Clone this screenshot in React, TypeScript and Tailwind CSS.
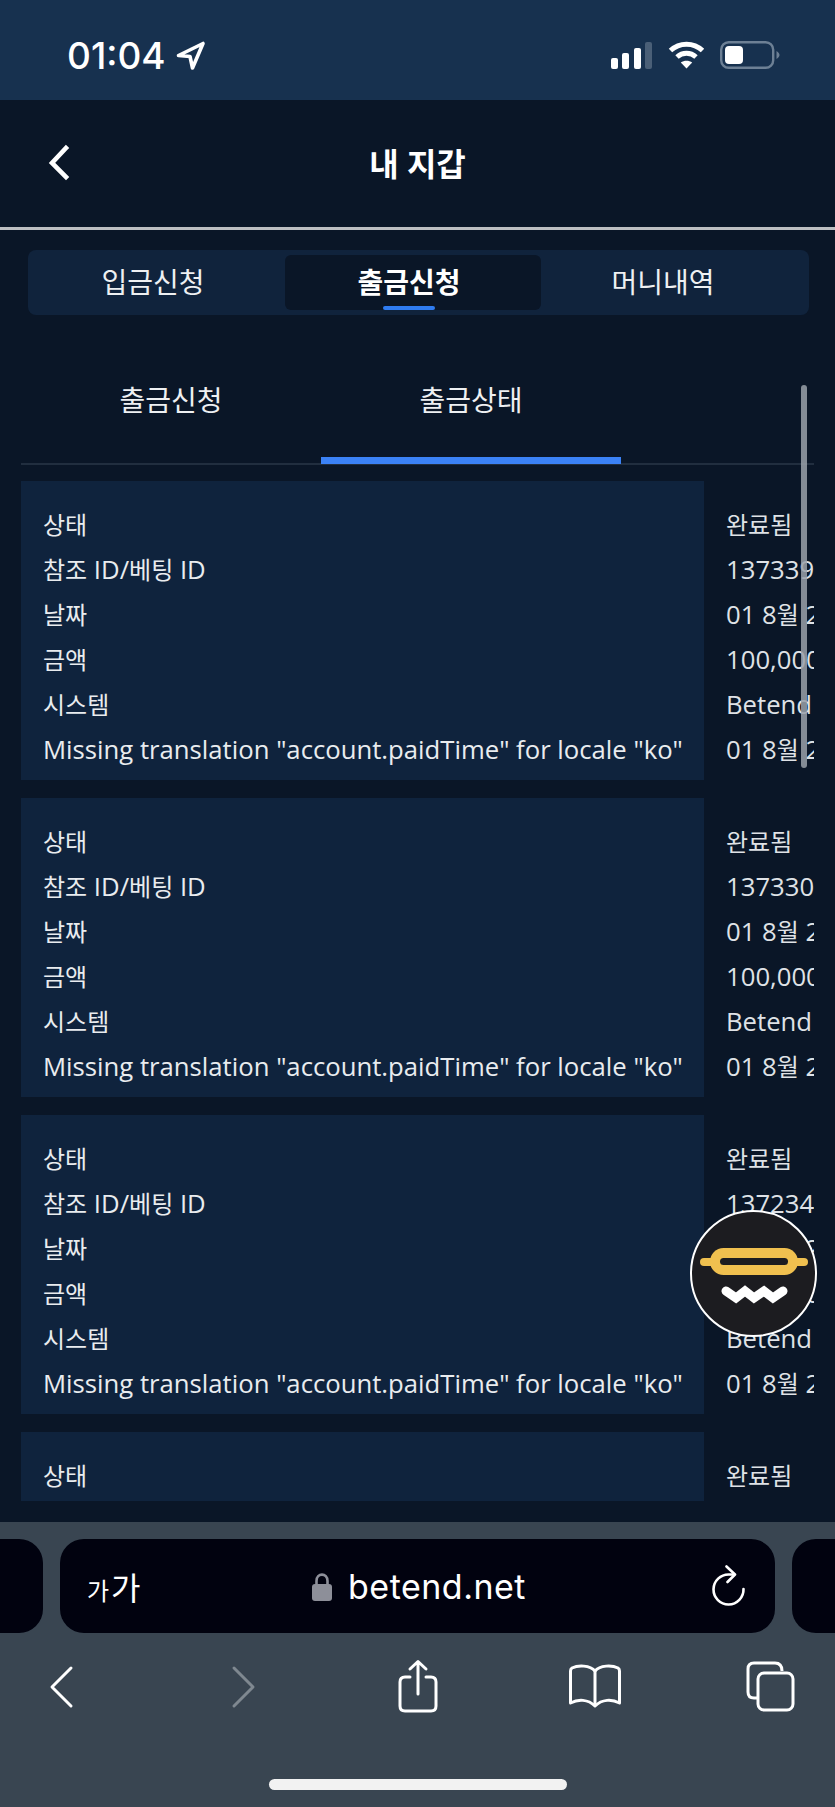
import React from 'react';

const KO = "font-['Open_Sans','Noto_Sans_CJK_KR',sans-serif]";

const LABELS = ['상태', '참조 ID/베팅 ID', '날짜', '금액', '시스템', 'Missing translation "account.paidTime" for locale "ko"'];

const RECORDS = [
    ['완료됨', '137339', '01 8월 2021', '100,000', 'Betend', '01 8월 2021'],
    ['완료됨', '137330', '01 8월 2021', '100,000', 'Betend', '01 8월 2021'],
    ['완료됨', '137234', '01 8월 2021', '100,000', 'Betend', '01 8월 2021'],
    ['완료됨', '137201', '01 8월 2021', '100,000', 'Betend', '01 8월 2021'],
];

// hangul runs are a touch smaller than the latin text next to them
const MixedText: React.FC<{ text: string }> = ({ text }) => (
    <>
        {text.split(/([가-힣]+)/).map((part, i) =>
            /[가-힣]/.test(part) ? (
                <span key={i} className="text-[24px]">{part}</span>
            ) : (
                <span key={i}>{part}</span>
            )
        )}
    </>
);

const StatusBar: React.FC = () => (
    <div className="h-[100px] shrink-0 bg-[#17314f] flex items-start justify-between pl-[67px] pr-[55px] pt-[40px] text-white">
        <div className="flex items-center">
            <span className="font-['Inter',sans-serif] font-medium text-[37px] leading-[32px]">01:04</span>
            <svg className="ml-[10px]" width="30" height="30" viewBox="0 0 30 30" fill="none" stroke="white" strokeWidth="3.6" strokeLinejoin="round">
                <path d="M2.5 14.5 L27 2.5 L16.5 27 L14 15.5 Z" />
            </svg>
        </div>
        <div className="flex items-center h-[30px]">
            <svg width="42" height="27" viewBox="0 0 42 27">
                <rect x="0" y="16" width="7" height="11" rx="2" fill="white" />
                <rect x="11" y="11" width="7" height="16" rx="2" fill="white" />
                <rect x="23" y="6" width="7" height="21" rx="2" fill="white" />
                <rect x="34" y="0" width="7" height="27" rx="2" fill="#4a5f77" />
            </svg>
            <svg className="ml-[15px]" width="37" height="28" viewBox="0 0 37 28" fill="none" stroke="white" strokeWidth="5">
                <path d="M2.5 9.5 C11.5 1 25.5 1 34.5 9.5" />
                <path d="M9 16 C14.5 11 22.5 11 28 16" />
                <path d="M18.5 27.5 L12.8 21.6 C16 19 21 19 24.2 21.6 Z" fill="white" stroke="none" />
            </svg>
            <svg className="ml-[15px]" width="60" height="28" viewBox="0 0 60 28">
                <rect x="1.2" y="1.2" width="52" height="25.6" rx="7.5" fill="none" stroke="#6d8095" strokeWidth="2.4" />
                <rect x="5" y="5" width="18" height="18" rx="4" fill="white" />
                <path d="M56.5 10 C58.5 11 59.5 13 59.5 14 C59.5 15 58.5 17 56.5 18 Z" fill="#6d8095" />
            </svg>
        </div>
    </div>
);

const Header: React.FC = () => (
    <div className="h-[130px] shrink-0 relative flex items-center justify-center border-b-[3px] border-[#bdbfc2]">
        <svg className="absolute left-[46px] top-[42px]" width="26" height="40" viewBox="0 0 26 40" fill="none" stroke="white" strokeWidth="4.6" strokeLinecap="square">
            <path d="M20 6 L6 21 L20 35" />
        </svg>
        <h1 className={`${KO} font-bold text-white text-[32px] leading-none`}>내 지갑</h1>
    </div>
);

const SegmentTabs: React.FC = () => (
    <div className="mx-[26px] ml-[28px] mt-[20px] h-[65px] shrink-0 rounded-[8px] bg-[#10233c] grid grid-cols-[256px_256px_252px] pl-[1px] py-[5px]">
        <div className={`${KO} flex items-center justify-center pr-[8px] pb-[2px] text-[28px] text-[#eef0f2]`}>입금신청</div>
        <div className={`${KO} relative flex items-center justify-center pr-[8px] pb-[2px] rounded-[6px] bg-[#0a1627] text-[28px] font-bold text-white`}>
            출금신청
            <span className="absolute bottom-0 left-[98px] w-[52px] h-[4px] rounded-[2px] bg-[#2f7cf0]" />
        </div>
        <div className={`${KO} flex items-center justify-center pr-[8px] pb-[2px] text-[28px] text-[#eef0f2]`}>머니내역</div>
    </div>
);

const SubTabs: React.FC = () => (
    <div className="mx-[21px] mt-[29px] h-[121px] shrink-0 flex border-b-[2px] border-[#212e3f]">
        <div className={`${KO} w-[300px] flex justify-center pt-[32px] text-[28px] leading-[48px] text-[#eef0f2]`}>출금신청</div>
        <div className={`${KO} w-[300px] flex justify-center pt-[32px] text-[28px] leading-[48px] text-[#eef0f2] border-b-[7px] border-[#3b82f6] h-[120px]`}>출금상태</div>
    </div>
);

const RecordCard: React.FC<{ values: string[] }> = ({ values }) => (
    <div className={`${KO} flex h-[299px] shrink-0 text-[25.7px] leading-[45px] text-[#e9ecef]`}>
        <div className="w-[683px] shrink-0 bg-[#0f233d] pl-[22px] pt-[21px]">
            {LABELS.map((label) => (
                <div key={label} className="h-[45px] whitespace-nowrap">
                    <MixedText text={label} />
                </div>
            ))}
        </div>
        <div className="flex-1 overflow-hidden pl-[22px] pt-[21px]">
            {values.map((value, i) => (
                <div key={i} className="h-[45px] whitespace-nowrap text-[#dfe2e6]">
                    <MixedText text={value} />
                </div>
            ))}
        </div>
    </div>
);

const BrowserBar: React.FC = () => (
    <div className="h-[285px] shrink-0 bg-[#394551] relative pt-[17px]">
        <div className="flex gap-[17px] h-[94px]">
            <div className="w-[43px] rounded-r-[24px] bg-[#01020f]" />
            <div className="w-[715px] rounded-[24px] bg-[#01020f] relative flex items-center justify-center text-white">
                <span className="absolute left-[27px] top-[31px] flex items-baseline font-['Noto_Sans_CJK_KR',sans-serif] leading-none">
                    <span className="text-[24px]">가</span>
                    <span className="text-[32px] ml-[2px]">가</span>
                </span>
                <svg className="ml-[3px] mt-[1px]" width="20" height="28" viewBox="0 0 20 28">
                    <path d="M4.5 13 V8 C4.5 -0.5 15.5 -0.5 15.5 8 V13" fill="none" stroke="#8d8f99" strokeWidth="2.6" />
                    <rect x="0" y="11" width="20" height="17" rx="3" fill="#8d8f99" />
                </svg>
                <span className="ml-[16px] font-['Inter',sans-serif] text-[34px] leading-none tracking-[0.5px] mt-[1px]">betend.net</span>
                <svg className="absolute left-[652px] top-[26px]" width="34" height="42" viewBox="0 0 34 42" fill="none" stroke="white" strokeWidth="2.6" strokeLinecap="round" strokeLinejoin="round">
                    <path d="M31.5 24 A15 15 0 1 1 17 9.5 L21 9.5" />
                    <path d="M14.5 1.5 L23 9.5 L15.5 17" />
                </svg>
            </div>
            <div className="flex-1 rounded-l-[24px] bg-[#01020f]" />
        </div>
        <div className="flex items-start h-[52px] mt-[29px] pl-[35px]">
            <svg width="52" height="52" viewBox="0 0 52 52" fill="none" stroke="white" strokeWidth="3" strokeLinecap="round" strokeLinejoin="round">
                <path d="M36 6 L17 25 L36 44" />
            </svg>
            <svg className="ml-[130px]" width="52" height="52" viewBox="0 0 52 52" fill="none" stroke="#7f8890" strokeWidth="3" strokeLinecap="round" strokeLinejoin="round">
                <path d="M17 6 L36 25 L17 44" />
            </svg>
            <svg className="ml-[123px] -mt-[3px]" width="52" height="56" viewBox="0 0 52 56" fill="none" stroke="white" strokeWidth="3" strokeLinecap="round" strokeLinejoin="round">
                <path d="M18 18 H13 Q8 18 8 23 V47 Q8 52 13 52 H39 Q44 52 44 47 V23 Q44 18 39 18 H34" />
                <path d="M26 35 V3 M18 10 L26 2.5 L34 10" />
            </svg>
            <svg className="ml-[125px]" width="52" height="50" viewBox="0 0 52 50" fill="none" stroke="white" strokeWidth="3" strokeLinecap="round" strokeLinejoin="round">
                <path d="M26 9 C21 3 9 3 3 6 Q1.5 7 1.5 9 V41 C9 37 19 37 26 44 C33 37 43 37 50.5 41 V9 Q50.5 7 49 6 C43 3 31 3 26 9 Z" />
                <path d="M26 9 V43" />
            </svg>
            <svg className="ml-[125px] -mt-[1px]" width="50" height="52" viewBox="0 0 50 52" fill="none" stroke="white" strokeWidth="3" strokeLinejoin="round">
                <path d="M12 37 H8 Q2 37 2 31 V8 Q2 2 8 2 H29 Q36 2 36 10" />
                <rect x="12" y="12" width="35" height="37" rx="6" />
            </svg>
        </div>
        <div className="absolute left-[269px] top-[257px] w-[298px] h-[11px] rounded-full bg-[#f2f2f2]" />
    </div>
);

const FloatingLogo: React.FC = () => (
    <div className="absolute left-[690px] top-[1210px] w-[127px] h-[127px] rounded-full border-[2px] border-white bg-[#1c1c20]">
        <svg className="-m-[2px]" width="127" height="127" viewBox="0 0 127 127" fill="none">
            <path d="M14 52 H114" stroke="#f0c04f" strokeWidth="8" strokeLinecap="round" />
            <rect x="20" y="38" width="88" height="27" rx="13.5" fill="#f0c04f" />
            <rect x="30" y="48" width="68" height="7" rx="3.5" fill="#1c1c20" />
            <path d="M36 81 L46 88 L55 81 L64 88 L74 81 L83 88 L93 81" stroke="white" strokeWidth="9" strokeLinecap="round" />
        </svg>
    </div>
);

export default function App() {
    return (
        <div className="relative w-[835px] h-[1807px] overflow-hidden bg-[#0a1627] flex flex-col">
            <StatusBar />
            <Header />
            <SegmentTabs />
            <SubTabs />
            <div className="flex-1 min-h-0 mt-[16px] mb-[21px] mx-[21px] overflow-hidden flex flex-col gap-[18px]">
                {RECORDS.map((values, i) => (
                    <RecordCard key={i} values={values} />
                ))}
            </div>
            <BrowserBar />
            {/* scrollbar + chat button sit on top of the list */}
            <div className="absolute left-[801px] top-[385px] w-[6px] h-[383px] rounded-full bg-[#9aa1aa]/85" />
            <FloatingLogo />
        </div>
    );
}
